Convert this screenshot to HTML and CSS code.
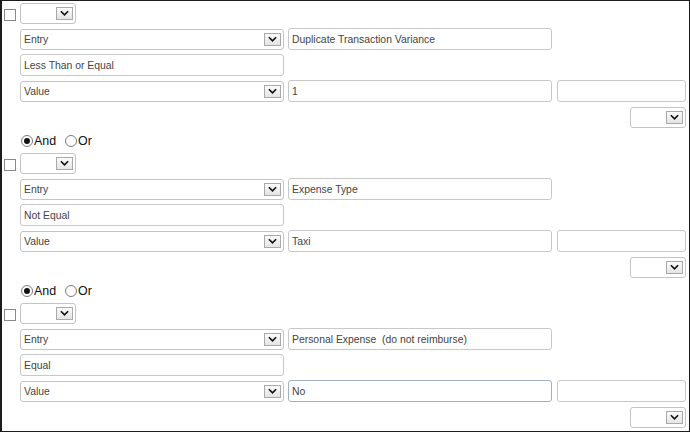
FILE: index.html
```html
<!DOCTYPE html>
<html>
<head>
<meta charset="utf-8">
<link rel="stylesheet" href="styles.css">
</head>
<body>
<div class="frame">

  <div class="block">
    <div class="row head">
      <span class="check"></span>
      <div class="sel small"><span class="btn"><svg viewBox="0 0 10 6" width="9" height="6"><path d="M1 1 L5 5 L9 1" fill="none" stroke="#111" stroke-width="1.8"/></svg></span></div>
    </div>
    <div class="row ind">
      <div class="sel wide"><span class="val">Entry</span><span class="btn"><svg viewBox="0 0 10 6" width="9" height="6"><path d="M1 1 L5 5 L9 1" fill="none" stroke="#111" stroke-width="1.8"/></svg></span></div>
      <div class="field wide">Duplicate Transaction Variance</div>
    </div>
    <div class="row ind">
      <div class="field wide">Less Than or Equal</div>
    </div>
    <div class="row ind">
      <div class="sel wide"><span class="val">Value</span><span class="btn"><svg viewBox="0 0 10 6" width="9" height="6"><path d="M1 1 L5 5 L9 1" fill="none" stroke="#111" stroke-width="1.8"/></svg></span></div>
      <div class="field wide">1</div>
      <div class="field narrow"></div>
    </div>
    <div class="row end">
      <div class="sel small"><span class="btn"><svg viewBox="0 0 10 6" width="9" height="6"><path d="M1 1 L5 5 L9 1" fill="none" stroke="#111" stroke-width="1.8"/></svg></span></div>
    </div>
  </div>

  <div class="logic">
    <span class="radio on"></span><span class="lbl">And</span>
    <span class="radio"></span><span class="lbl">Or</span>
  </div>

  <div class="block">
    <div class="row head">
      <span class="check"></span>
      <div class="sel small"><span class="btn"><svg viewBox="0 0 10 6" width="9" height="6"><path d="M1 1 L5 5 L9 1" fill="none" stroke="#111" stroke-width="1.8"/></svg></span></div>
    </div>
    <div class="row ind">
      <div class="sel wide"><span class="val">Entry</span><span class="btn"><svg viewBox="0 0 10 6" width="9" height="6"><path d="M1 1 L5 5 L9 1" fill="none" stroke="#111" stroke-width="1.8"/></svg></span></div>
      <div class="field wide">Expense Type</div>
    </div>
    <div class="row ind">
      <div class="field wide">Not Equal</div>
    </div>
    <div class="row ind">
      <div class="sel wide"><span class="val">Value</span><span class="btn"><svg viewBox="0 0 10 6" width="9" height="6"><path d="M1 1 L5 5 L9 1" fill="none" stroke="#111" stroke-width="1.8"/></svg></span></div>
      <div class="field wide">Taxi</div>
      <div class="field narrow"></div>
    </div>
    <div class="row end">
      <div class="sel small"><span class="btn"><svg viewBox="0 0 10 6" width="9" height="6"><path d="M1 1 L5 5 L9 1" fill="none" stroke="#111" stroke-width="1.8"/></svg></span></div>
    </div>
  </div>

  <div class="logic">
    <span class="radio on"></span><span class="lbl">And</span>
    <span class="radio"></span><span class="lbl">Or</span>
  </div>

  <div class="block">
    <div class="row head">
      <span class="check"></span>
      <div class="sel small"><span class="btn"><svg viewBox="0 0 10 6" width="9" height="6"><path d="M1 1 L5 5 L9 1" fill="none" stroke="#111" stroke-width="1.8"/></svg></span></div>
    </div>
    <div class="row ind">
      <div class="sel wide"><span class="val">Entry</span><span class="btn"><svg viewBox="0 0 10 6" width="9" height="6"><path d="M1 1 L5 5 L9 1" fill="none" stroke="#111" stroke-width="1.8"/></svg></span></div>
      <div class="field wide">Personal Expense&nbsp; (do not reimburse)</div>
    </div>
    <div class="row ind">
      <div class="field wide">Equal</div>
    </div>
    <div class="row ind">
      <div class="sel wide"><span class="val">Value</span><span class="btn"><svg viewBox="0 0 10 6" width="9" height="6"><path d="M1 1 L5 5 L9 1" fill="none" stroke="#111" stroke-width="1.8"/></svg></span></div>
      <div class="field wide focus">No</div>
      <div class="field narrow"></div>
    </div>
    <div class="row end">
      <div class="sel small"><span class="btn"><svg viewBox="0 0 10 6" width="9" height="6"><path d="M1 1 L5 5 L9 1" fill="none" stroke="#111" stroke-width="1.8"/></svg></span></div>
    </div>
  </div>

</div>
</body>
</html>
```
FILE: styles.css
```css
html, body {
  margin: 0;
  padding: 0;
  background: #fff;
}

.frame {
  box-sizing: border-box;
  width: 690px;
  height: 432px;
  border: 1px solid #1c1c1c;
  border-left-width: 2px;
  padding: 1px 3px 0 2px;
  font-family: "Liberation Sans", Arial, sans-serif;
  font-size: 10.4px;
  color: #444;
  display: flex;
  flex-direction: column;
}

.block {
  display: flex;
  flex-direction: column;
  gap: 4px;
}

.row {
  display: flex;
  align-items: center;
  height: 22px;
}

.head {
  gap: 4px;
}

.ind {
  padding-left: 16px;
  gap: 4px;
}

.end {
  justify-content: flex-end;
}

.check {
  box-sizing: border-box;
  width: 12px;
  height: 12px;
  border: 1px solid #8a8a8a;
  background: #fff;
  margin-top: 3px;
}

.sel {
  box-sizing: border-box;
  height: 21px;
  border: 1px solid #c4c4c4;
  border-radius: 3px;
  display: flex;
  align-items: center;
  justify-content: space-between;
  padding: 0 2px 0 3px;
  background: #fff;
}

.sel.small {
  width: 56px;
  justify-content: flex-end;
}

.sel.wide {
  width: 264px;
}

.btn {
  box-sizing: border-box;
  width: 17px;
  height: 13px;
  border: 1px solid #a9a9a9;
  background: linear-gradient(#fbfbfb, #e4e4e4);
  display: flex;
  align-items: center;
  justify-content: center;
}

.btn svg {
  display: block;
}

.field {
  box-sizing: border-box;
  height: 22px;
  border: 1px solid #c8c8c8;
  border-radius: 3px;
  display: flex;
  align-items: center;
  padding-left: 3px;
  background: #fff;
  white-space: pre;
}

.field.wide {
  width: 264px;
}

.field.narrow {
  width: 129px;
  margin-left: 1px;
}

.field.focus {
  border-color: #9fb0c4;
}

.logic {
  display: flex;
  align-items: center;
  height: 17px;
  margin: 4px 0 3px 17px;
  font-size: 12.4px;
  color: #111;
}

.radio {
  box-sizing: border-box;
  width: 12px;
  height: 12px;
  border: 1px solid #7a7a7a;
  border-radius: 50%;
  background: #fff;
  margin-right: 1px;
  position: relative;
}

.radio.on::after {
  content: "";
  position: absolute;
  left: 2px;
  top: 2px;
  width: 6px;
  height: 6px;
  border-radius: 50%;
  background: #111;
}

.lbl {
  margin-right: 9px;
}
```
